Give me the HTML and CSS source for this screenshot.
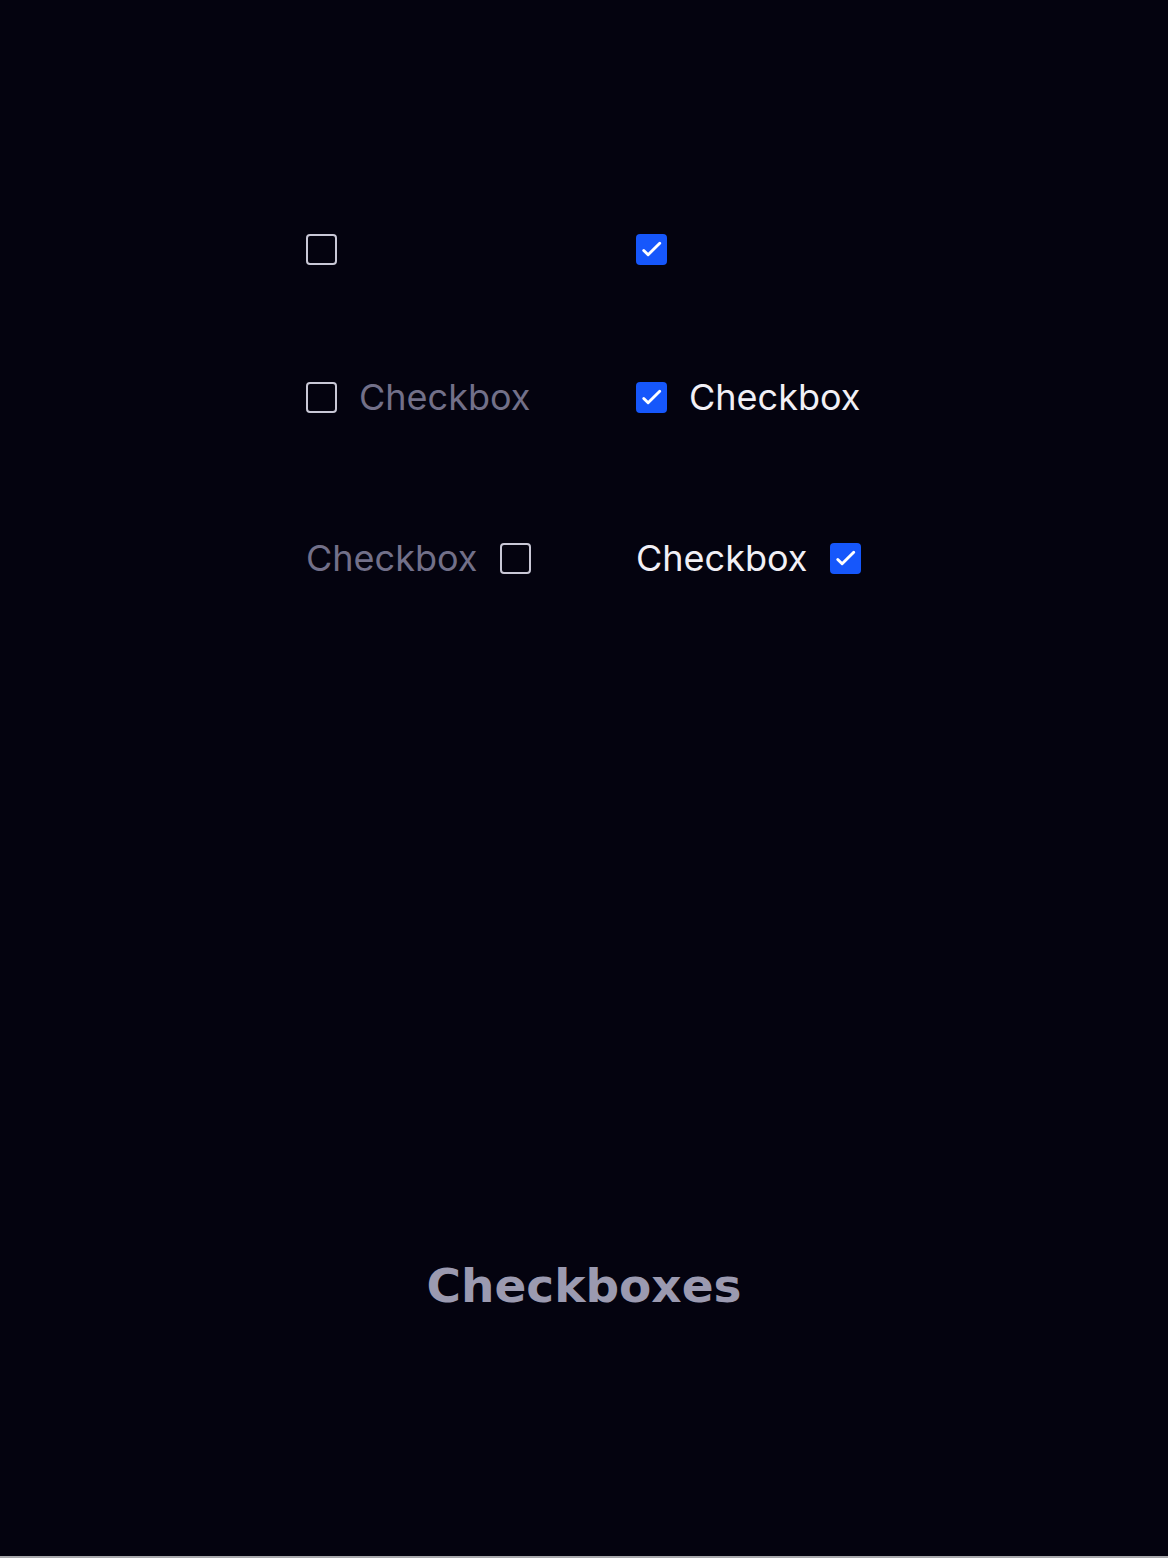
FILE: index.html
```html
<!DOCTYPE html>
<html>
<head>
<meta charset="utf-8">
<link rel="stylesheet" href="styles.css">
</head>
<body>
<div class="page">
  <div class="grid">
    <div class="cell"><span class="box"></span></div>
    <div class="cell"><span class="box checked"><svg viewBox="0 0 32 32" class="tick"><path d="M8 17 L12.5 21.5 L24.5 9.5"/></svg></span></div>

    <div class="cell"><span class="box"></span><span class="label muted">Checkbox</span></div>
    <div class="cell"><span class="box checked"><svg viewBox="0 0 32 32" class="tick"><path d="M8 17 L12.5 21.5 L24.5 9.5"/></svg></span><span class="label">Checkbox</span></div>

    <div class="cell"><span class="label muted left">Checkbox</span><span class="box"></span></div>
    <div class="cell"><span class="label left">Checkbox</span><span class="box checked"><svg viewBox="0 0 32 32" class="tick"><path d="M8 17 L12.5 21.5 L24.5 9.5"/></svg></span></div>
  </div>
  <h1 class="title">Checkboxes</h1>
</div>
</body>
</html>
```
FILE: styles.css
```css
html { background: #a9a9ad; }
body { margin: 0; }
.page {
  width: 1168px;
  height: 1556px;
  background: #04030f;
  box-sizing: border-box;
  padding-top: 234px;
  font-family: Inter, "Noto Sans", sans-serif;
  overflow: hidden;
}
.grid {
  margin-left: 306px;
  display: grid;
  grid-template-columns: 330px 330px;
  grid-template-rows: 148px 161px 31px;
}
.cell {
  display: flex;
  height: 31px;
  align-items: center;
}
.box {
  width: 31px;
  height: 31px;
  box-sizing: border-box;
  border: 2px solid #c9c8d6;
  border-radius: 4px;
  flex: none;
  display: block;
}
.box.checked {
  background: #1657fb;
  border: 0;
}
.tick {
  display: block;
  width: 31px;
  height: 31px;
  fill: none;
  stroke: #ffffff;
  stroke-width: 3;
  stroke-linecap: round;
  stroke-linejoin: round;
}
.label {
  font-size: 36px;
  color: #f1f0f6;
  margin-left: 22px;
  line-height: 31px;
}
.label.left {
  margin-left: 0;
  margin-right: 23px;
}
.label.muted { color: #727089; }
.title {
  margin: 0;
  margin-top: 687px;
  text-align: center;
  font-family: "DejaVu Sans", sans-serif;
  font-size: 47px;
  font-weight: 700;
  color: #9b9ab0;
  line-height: 50px;
}
```
